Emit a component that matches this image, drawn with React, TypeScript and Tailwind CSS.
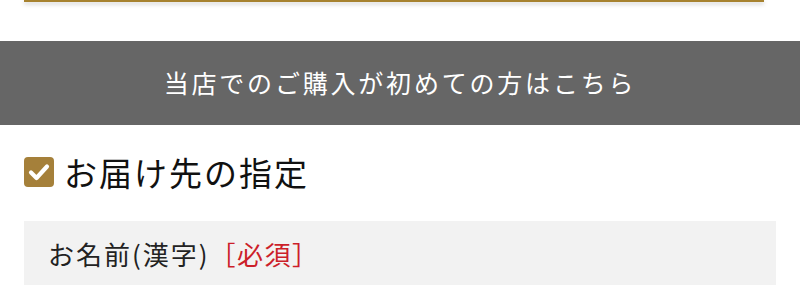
export default function App() {
  const font = { fontFamily: '"Noto Sans CJK JP", "Noto Sans", sans-serif' };
  return (
    <div className="w-[800px] h-[302px] overflow-hidden bg-white" style={font}>
      {/* top button edge */}
      <div className="ml-6 mr-9">
        <div className="h-[2px] bg-[#a7822f] shadow-[0_2px_4px_rgba(0,0,0,0.25)]" />
      </div>

      {/* first-time banner */}
      <div className="mt-[39px] h-[84px] bg-[#666666] flex items-center justify-center">
        <span className="text-white text-[25px] tracking-[2.8px]">当店でのご購入が初めての方はこちら</span>
      </div>

      {/* section heading */}
      <div className="flex items-center gap-2.5 px-6 mt-[32px] h-[30px]">
        <div className="w-[30px] h-[30px] rounded-[4px] bg-[#a5803a] flex items-center justify-center">
          <svg width="24" height="24" viewBox="0 0 24 24" fill="none">
            <path d="M4 12.5 L9.5 18 L20 6.5" stroke="white" strokeWidth="4.2" strokeLinecap="round" strokeLinejoin="round" />
          </svg>
        </div>
        <h2 className="text-[33px] text-[#111] tracking-[2px] leading-none">お届け先の指定</h2>
      </div>

      {/* name field label */}
      <div className="mx-6 mt-[34px] h-[64px] bg-[#f2f2f2] flex items-center px-6">
        <span className="text-[26px] text-[#222] tracking-[2px]">お名前(漢字)</span>
        <span className="text-[26px] text-[#cc1f2a] tracking-[1.5px]">［必須］</span>
      </div>
    </div>
  );
}
